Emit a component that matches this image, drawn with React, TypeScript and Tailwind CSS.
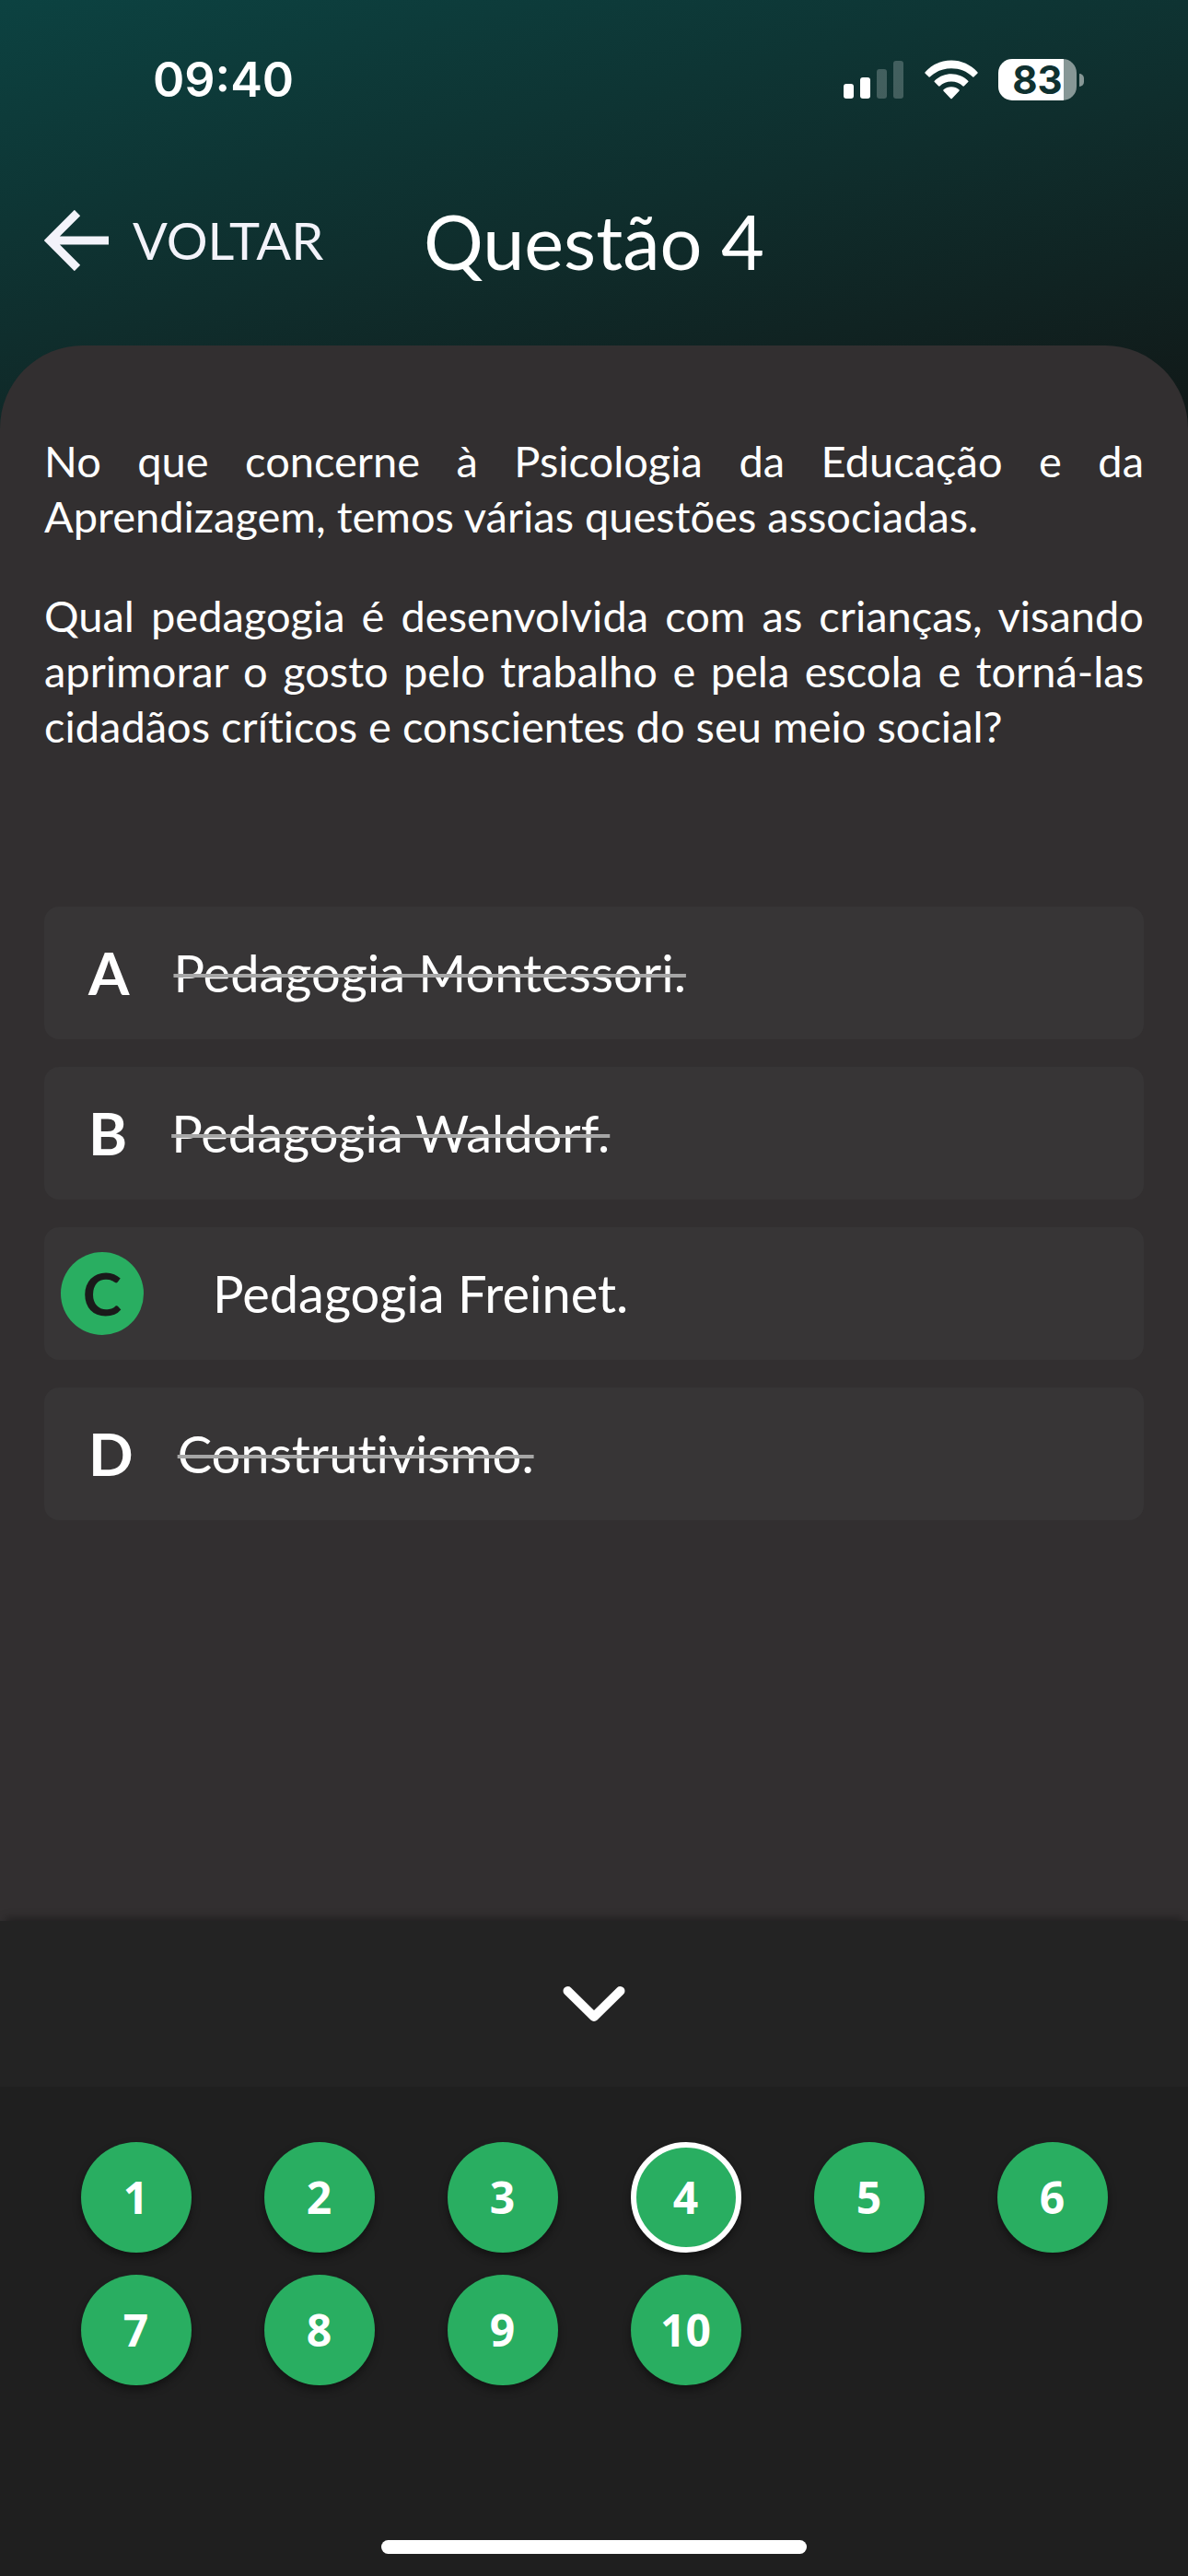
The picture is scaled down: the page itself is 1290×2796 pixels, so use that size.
import { useState } from "react"

const PARAGRAPHS = [
  "No que concerne à Psicologia da Educação e da Aprendizagem, temos várias questões associadas.",
  "Qual pedagogia é desenvolvida com as crianças, visando aprimorar o gosto pelo trabalho e pela escola e torná-las cidadãos críticos e conscientes do seu meio social?",
]

const OPTIONS = [
  { letter: "A", text: "Pedagogia Montessori." },
  { letter: "B", text: "Pedagogia Waldorf." },
  { letter: "C", text: "Pedagogia Freinet." },
  { letter: "D", text: "Construtivismo." },
]

const QUESTIONS = [1, 2, 3, 4, 5, 6, 7, 8, 9, 10]

const StatusBar = () => (
  <div className="flex h-[173px] items-center justify-between pl-[166px] pr-[113px] font-[Inter,sans-serif]">
    <div className="text-[52px] font-semibold leading-none">09:40</div>
    <div className="flex items-center">
      <svg viewBox="0 0 65 41" className="mr-[23px] h-[41px] w-[65px]" fill="#fff" aria-hidden="true">
        <rect x="0" y="25" width="11" height="16" rx="3" />
        <rect x="18" y="18" width="11" height="23" rx="3" />
        <rect x="36" y="9" width="11" height="32" rx="3" opacity="0.22" />
        <rect x="54" y="0" width="11" height="41" rx="3" opacity="0.22" />
      </svg>
      <svg viewBox="0 0 58 43" className="mr-[22px] h-[43px] w-[58px]" fill="#fff" aria-hidden="true">
        <path d="M0.6 13.2C8 5.200 18 0.500 29 0.500S50 5.200 57.400 13.200Q58 14 57.300 14.700L53.400 18.400Q52.700 19 52 18.300C46 12.500 38 9.300 29 9.300S12 12.500 6 18.300Q5.300 19 4.600 18.400L0.700 14.700Q0 14 0.600 13.200Z" />
        <path d="M10.800 22.700C15.500 18 22 15.200 29 15.200S42.500 18 47.200 22.700Q47.900 23.400 47.200 24.100L43 28.300Q42.300 29 41.600 28.400C38.200 25.300 33.800 23.600 29 23.600S19.800 25.300 16.400 28.400Q15.700 29 15 28.300L10.800 24.100Q10.100 23.400 10.800 22.700Z" />
        <path d="M20.600 32.200C22.800 30.300 25.700 29.200 29 29.200S35.200 30.300 37.400 32.200Q38.200 33 37.500 33.700L29.700 41.900Q29 42.600 28.300 41.900L20.500 33.700Q19.800 33 20.600 32.200Z" />
      </svg>
      <div className="flex h-[45px] w-[85px] items-center justify-center rounded-[15px] bg-[linear-gradient(90deg,#fff_71px,#879796_71px)] text-[42px] font-bold leading-none text-[#0f3130]">
        83
      </div>
      <div className="ml-[3px] h-[14px] w-[5px] rounded-r-full bg-[#879796]" />
    </div>
  </div>
)

const BackArrow = () => (
  <svg
    viewBox="0 0 70 66"
    className="h-[66px] w-[70px]"
    fill="none"
    stroke="currentColor"
    strokeWidth="9"
    aria-hidden="true"
  >
    <path d="M36 3L6 33L36 63M6 33H70" />
  </svg>
)

const App = () => {
  const [answer, setAnswer] = useState("C")
  const [current, setCurrent] = useState(4)
  const [isListOpen, setIsListOpen] = useState(true)

  return (
    <div className="flex min-h-screen flex-col bg-[linear-gradient(168deg,#0c4241_0px,#0f2e2d_360px,#111817_720px)] font-[Lato,sans-serif] text-white [font-variant-ligatures:no-common-ligatures]">
      <StatusBar />

      <header className="grid h-[202px] grid-cols-[1fr_auto_1fr] items-start px-12 pt-10">
        <button type="button" className="flex h-24 items-center gap-[26px] text-[56px] leading-none text-[#f3f3fa]">
          <BackArrow />
          VOLTAR
        </button>
        <h1 className="flex h-24 items-center text-[81px] leading-none">Questão {current}</h1>
      </header>

      <main className="flex-1 rounded-t-[90px] bg-[#322f30] px-12 pb-12 pt-[95px]">
        <div className="flex flex-col gap-12 text-justify text-[47px] leading-[60px]">
          {PARAGRAPHS.map((paragraph) => (
            <p key={paragraph}>{paragraph}</p>
          ))}
        </div>

        <div className="mt-[166px] flex flex-col gap-[30px]">
          {OPTIONS.map((option) => {
            const selected = option.letter === answer

            return (
              <button
                key={option.letter}
                type="button"
                aria-pressed={selected}
                onClick={() => setAnswer(option.letter)}
                className={`flex h-36 items-center rounded-[16px] bg-[#373536] text-left ${
                  selected ? "gap-[75px] pl-[18px]" : "gap-12 pl-12"
                }`}
              >
                <span
                  className={`text-[64px] font-bold leading-none ${
                    selected
                      ? "flex size-[90px] items-center justify-center rounded-full bg-[#29ae61] text-[#1a1a1a]"
                      : ""
                  }`}
                >
                  {option.letter}
                </span>
                <span
                  className={`text-[56px] leading-none ${
                    selected ? "" : "line-through decoration-[#a6a6a6] decoration-[4px]"
                  }`}
                >
                  {option.text}
                </span>
              </button>
            )
          })}
        </div>
      </main>

      <footer className="bg-[#1f1f1f] shadow-[0_-9px_9px_-6px_rgba(0,0,0,0.35)]">
        <button
          type="button"
          aria-label={isListOpen ? "Ocultar questões" : "Mostrar questões"}
          aria-expanded={isListOpen}
          onClick={() => setIsListOpen((open) => !open)}
          className="flex h-[180px] w-full items-center justify-center bg-[#232323]"
        >
          <svg
            viewBox="0 0 68 38"
            className={`h-[38px] w-[68px] ${isListOpen ? "" : "rotate-180"}`}
            fill="none"
            stroke="currentColor"
            strokeWidth="10"
            strokeLinecap="round"
            strokeLinejoin="round"
            aria-hidden="true"
          >
            <path d="M5.500 5L34 33L62.500 5" />
          </svg>
        </button>

        {isListOpen ? (
          <nav className="grid grid-cols-6 justify-items-center gap-y-6 px-12 pt-[60px] font-['Open_Sans',sans-serif]">
            {QUESTIONS.map((number) => (
              <button
                key={number}
                type="button"
                aria-current={number === current ? "page" : undefined}
                onClick={() => setCurrent(number)}
                className={`size-[120px] rounded-full bg-[#29ae61] text-[48px] font-bold leading-none shadow-[0_5px_10px_rgba(0,0,0,0.4)] ${
                  number === current ? "border-[6px] border-white" : ""
                }`}
              >
                {number}
              </button>
            ))}
          </nav>
        ) : null}

        <div className="flex justify-center pb-6 pt-[168px]">
          <div className="h-[15px] w-[462px] rounded-full bg-white" />
        </div>
      </footer>
    </div>
  )
}

export default App
